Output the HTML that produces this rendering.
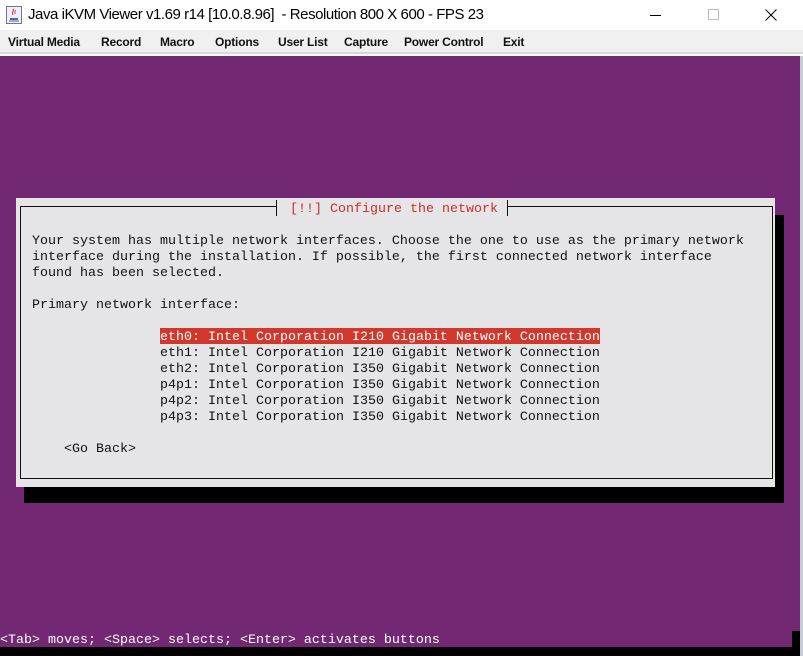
<!DOCTYPE html>
<html><head><meta charset="utf-8"><style>
*{margin:0;padding:0;box-sizing:border-box}
body{width:803px;height:656px;overflow:hidden;background:#fff;position:relative;font-family:"Liberation Sans",sans-serif}
.tb{position:absolute;left:0;top:0;width:803px;height:30px;background:#fff}
.tb .t{position:absolute;left:28px;top:6px;font-size:15px;color:#000;letter-spacing:-0.45px}
.mb{position:absolute;left:0;top:30px;width:803px;height:24px;background:#f0f0f0;border-bottom:2px solid #d8d8d8}
.mb span{position:absolute;top:5px;font-size:12px;font-weight:bold;color:#111;letter-spacing:-0.2px}
.scr{position:absolute;left:0;top:56px;width:800px;height:600px;background:#722872;overflow:hidden}
.rb{position:absolute;left:800px;top:56px;width:3px;height:600px;background:#c8ccd4}
.m{position:absolute;font-family:"Liberation Mono","DejaVu Sans Mono",monospace;font-size:13.33px;line-height:16px;white-space:pre;color:#111}
</style></head><body>
<div class="tb">
<svg style="position:absolute;left:6px;top:6px" width="16" height="18" viewBox="0 0 16 18"><rect x="0.5" y="0.5" width="15" height="17" fill="#eef" stroke="#777"/><path d="M4 12h8v2H4z" fill="#4a6fa5"/><path d="M7 3c2 2-2 3 0 6M9 4c1 1-1 2 0 4" stroke="#d33" fill="none"/><path d="M3 15h10" stroke="#4a6fa5"/></svg>
<div class="t">Java iKVM Viewer v1.69 r14 [10.0.8.96]&nbsp; - Resolution 800 X 600 - FPS 23</div>
<div style="position:absolute;left:650px;top:15px;width:11px;height:1px;background:#000"></div>
<div style="position:absolute;left:708px;top:9px;width:11px;height:11px;border:1px solid #bbb"></div>
<svg style="position:absolute;left:765px;top:9px" width="12" height="12"><path d="M0.5 0.5L11.5 11.5M11.5 0.5L0.5 11.5" stroke="#000" stroke-width="1"/></svg>
</div>
<div class="mb">
<span style="left:8px">Virtual Media</span><span style="left:101px">Record</span><span style="left:160px">Macro</span><span style="left:215px">Options</span><span style="left:278px">User List</span><span style="left:344px">Capture</span><span style="left:404px">Power Control</span><span style="left:503px">Exit</span>
</div>
<div class="scr">
<div style="position:absolute;left:24px;top:159px;width:760px;height:288px;background:#000"></div>
<div style="position:absolute;left:16px;top:142px;width:759px;height:289px;background:#e5e4e6"></div>
<div style="position:absolute;left:20px;top:150px;width:753px;height:273px;border:1px solid #111"></div>
<div style="position:absolute;left:276px;top:144px;width:232px;height:16px;background:#e5e4e6;border-left:1px solid #111;border-right:1px solid #111"></div>
<div class="m" style="left:290px;top:146px;color:#c9302a">[!!] Configure the network</div>
<div class="m" style="left:32px;top:178px">Your system has multiple network interfaces. Choose the one to use as the primary network
interface during the installation. If possible, the first connected network interface
found has been selected.

Primary network interface:</div>
<div style="position:absolute;left:160px;top:272px;width:440px;height:16px;background:#d2372b"></div>
<div class="m" style="left:160px;top:274px"><span style="color:#fff">eth0: Intel Corporation I210 Gigabit Network Connection</span>
eth1: Intel Corporation I210 Gigabit Network Connection
eth2: Intel Corporation I350 Gigabit Network Connection
p4p1: Intel Corporation I350 Gigabit Network Connection
p4p2: Intel Corporation I350 Gigabit Network Connection
p4p3: Intel Corporation I350 Gigabit Network Connection</div>
<div class="m" style="left:64px;top:386px">&lt;Go Back&gt;</div>
<div style="position:absolute;left:792px;top:575px;width:8px;height:16px;background:#000"></div>
<div style="position:absolute;left:0;top:591px;width:800px;height:9px;background:#000"></div>
<div class="m" style="left:0;top:577px;color:#fff">&lt;Tab&gt; moves; &lt;Space&gt; selects; &lt;Enter&gt; activates buttons</div>
</div>
<div class="rb"></div>
</body></html>
